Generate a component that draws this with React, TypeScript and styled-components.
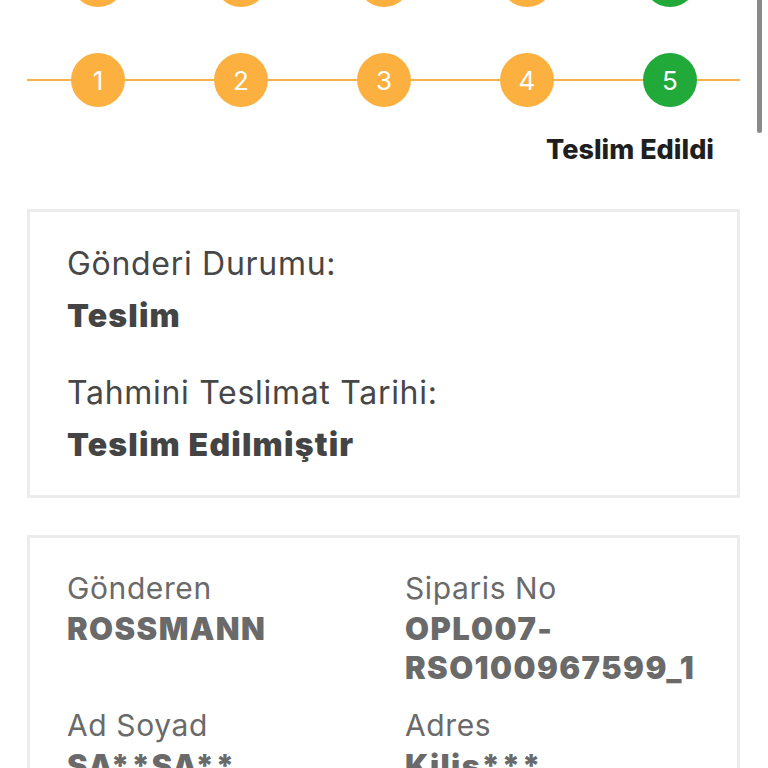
import React, { FC } from 'react';
import styled, { createGlobalStyle } from 'styled-components';

const GlobalStyle = createGlobalStyle`
  html, body {
    margin: 0;
    padding: 0;
    background: #ffffff;
  }
  body {
    font-family: Inter, "Noto Sans", Roboto, sans-serif;
    -webkit-font-smoothing: antialiased;
  }
`;

const Page = styled.div`
  position: relative;
  height: 768px;
  overflow: hidden;
`;

const Content = styled.div`
  padding: 0 28px 0 27px;
  display: flex;
  flex-direction: column;
`;

const Tracker = styled.div<{ offsetTop?: number }>`
  display: flex;
  align-items: center;
  height: 54px;
  margin-top: ${({ offsetTop }) => offsetTop || 0}px;
`;

const Segment = styled.div<{ width?: number }>`
  height: 2px;
  background: #f7b349;
  flex: ${({ width }) => (width ? `0 0 ${width}px` : '1')};
`;

const Step = styled.div<{ done?: boolean }>`
  flex: 0 0 54px;
  height: 54px;
  border-radius: 50%;
  background: ${({ done }) => (done ? '#21a93a' : '#fbb03f')};
  color: #ffffff;
  display: flex;
  align-items: center;
  justify-content: center;
  font-size: 26px;
  font-weight: 400;
`;

const StatusLabel = styled.div`
  align-self: flex-end;
  margin: 27px 26px 0 0;
  font-size: 27px;
  line-height: 32px;
  font-weight: 800;
  color: #1f1f21;
`;

const Card = styled.div<{ gapTop: number; padTop: number }>`
  margin-top: ${({ gapTop }) => gapTop}px;
  border: 3px solid #ececec;
  padding: ${({ padTop }) => padTop}px 37px 32px;
`;

const StatusTitle = styled.div<{ spaced?: boolean }>`
  margin-top: ${({ spaced }) => (spaced ? 41 : 0)}px;
  font-size: 32px;
  line-height: 36px;
  letter-spacing: 0.7px;
  color: #474747;
`;

const StatusValue = styled.div`
  margin-top: 16px;
  font-size: 32px;
  line-height: 36px;
  font-weight: 900;
  letter-spacing: 1.2px;
  color: #444444;
`;

const InfoGrid = styled.div`
  display: grid;
  grid-template-columns: 338px 1fr;
  row-gap: 21px;
`;

const InfoCell = styled.div`
  display: flex;
  flex-direction: column;
`;

const InfoLabel = styled.div`
  font-size: 30px;
  line-height: 34px;
  letter-spacing: 0.6px;
  color: #6a6a6a;
`;

const InfoValue = styled.div`
  margin-top: 4px;
  font-size: 31px;
  line-height: 39px;
  font-weight: 900;
  letter-spacing: 1.4px;
  color: #6a6a6a;
  word-break: break-word;
`;

const ScrollThumb = styled.div`
  position: absolute;
  top: -20px;
  right: 6px;
  width: 5px;
  height: 153px;
  border-radius: 3px;
  background: #8a8a8a;
`;

type TrackProps = { offsetTop?: number };

const StepTracker: FC<TrackProps> = ({ offsetTop }) => (
  <Tracker offsetTop={offsetTop}>
    <Segment width={44} />
    {[1, 2, 3, 4, 5].map((n) => (
      <React.Fragment key={n}>
        <Step done={n === 5}>{n}</Step>
        <Segment width={n === 5 ? 43 : undefined} />
      </React.Fragment>
    ))}
  </Tracker>
);

const info = [
  { label: 'Gönderen', value: 'ROSSMANN' },
  { label: 'Siparis No', value: 'OPL007-\nRSO100967599_1' },
  { label: 'Ad Soyad', value: 'SA**SA**' },
  { label: 'Adres', value: 'Kilis***' },
];

const App: FC = () => (
  <Page>
    <GlobalStyle />
    <Content>
      <StepTracker offsetTop={-47} />
      <StepTracker offsetTop={46} />
      <StatusLabel>Teslim Edildi</StatusLabel>

      <Card gapTop={43} padTop={34}>
        <StatusTitle>Gönderi Durumu:</StatusTitle>
        <StatusValue>Teslim</StatusValue>
        <StatusTitle spaced>Tahmini Teslimat Tarihi:</StatusTitle>
        <StatusValue>Teslim Edilmiştir</StatusValue>
      </Card>

      <Card gapTop={37} padTop={33}>
        <InfoGrid>
          {info.map((item) => (
            <InfoCell key={item.label}>
              <InfoLabel>{item.label}</InfoLabel>
              <InfoValue>
                {item.value.split('\n').map((line) => (
                  <div key={line}>{line}</div>
                ))}
              </InfoValue>
            </InfoCell>
          ))}
        </InfoGrid>
      </Card>
    </Content>
    <ScrollThumb />
  </Page>
);

export default App;
